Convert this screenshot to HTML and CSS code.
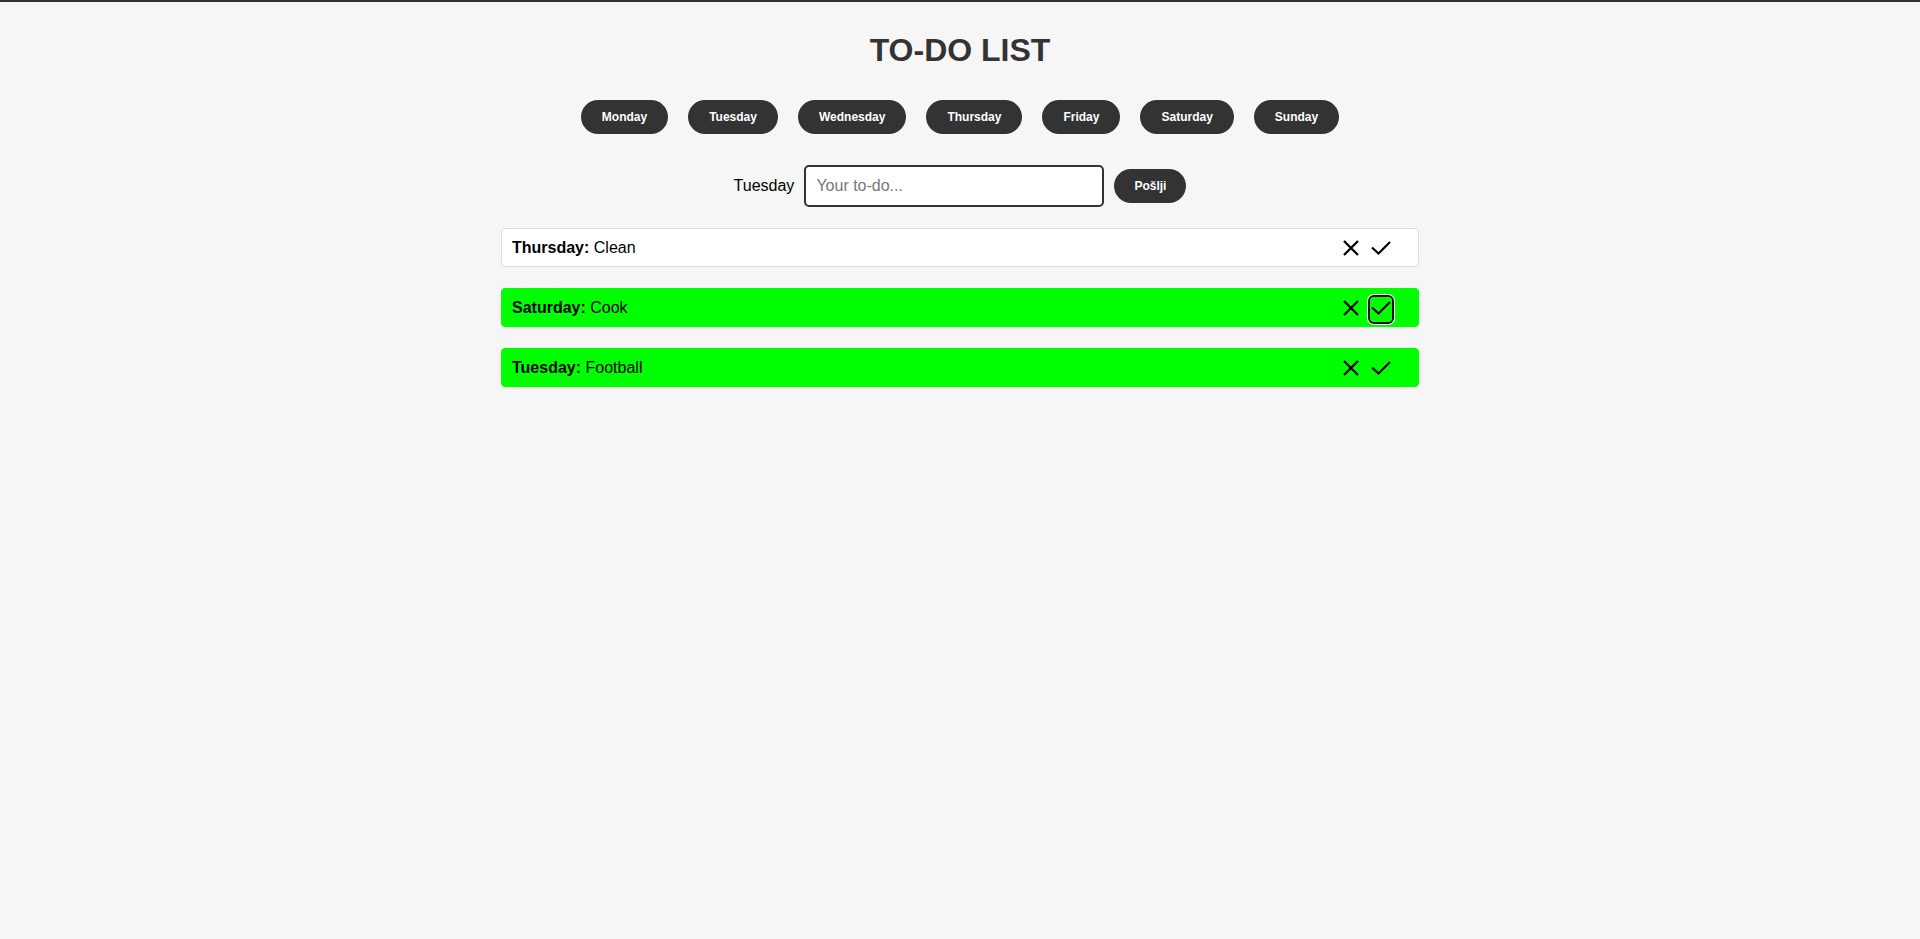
FILE: index.html
```html
<!DOCTYPE html>
<html lang="en">
<head>
<meta charset="utf-8">
<title>To-Do List</title>
<link rel="stylesheet" href="styles.css">
</head>
<body>
<main class="app">
  <h1 class="title">TO-DO LIST</h1>
  <nav class="days">
    <button class="day-btn">Monday</button>
    <button class="day-btn">Tuesday</button>
    <button class="day-btn">Wednesday</button>
    <button class="day-btn">Thursday</button>
    <button class="day-btn">Friday</button>
    <button class="day-btn">Saturday</button>
    <button class="day-btn">Sunday</button>
  </nav>
  <form class="add-row">
    <span class="add-label">Tuesday</span>
    <input class="add-input" type="text" placeholder="Your to-do...">
    <button class="send-btn" type="button">Pošlji</button>
  </form>
  <ul class="todos">
    <li class="todo">
      <span class="todo-text"><strong>Thursday:</strong> Clean</span>
      <span class="actions">
        <button class="icon-btn" aria-label="Delete"><svg width="16" height="16" viewBox="0 0 16 16"><path d="M1 1 L15 15 M15 1 L1 15" stroke="#000" stroke-width="2.3" fill="none"/></svg></button>
        <button class="icon-btn" aria-label="Done"><svg width="20" height="14" viewBox="0 0 20 14"><path d="M1 6.5 L7.5 12.5 L19 1" stroke="#000" stroke-width="2.2" fill="none"/></svg></button>
      </span>
    </li>
    <li class="todo done">
      <span class="todo-text"><strong>Saturday:</strong> Cook</span>
      <span class="actions">
        <button class="icon-btn" aria-label="Delete"><svg width="16" height="16" viewBox="0 0 16 16"><path d="M1 1 L15 15 M15 1 L1 15" stroke="#000" stroke-width="2.3" fill="none"/></svg></button>
        <button class="icon-btn focused" aria-label="Done"><svg width="20" height="14" viewBox="0 0 20 14"><path d="M1 6.5 L7.5 12.5 L19 1" stroke="#000" stroke-width="2.2" fill="none"/></svg></button>
      </span>
    </li>
    <li class="todo done">
      <span class="todo-text"><strong>Tuesday:</strong> Football</span>
      <span class="actions">
        <button class="icon-btn" aria-label="Delete"><svg width="16" height="16" viewBox="0 0 16 16"><path d="M1 1 L15 15 M15 1 L1 15" stroke="#000" stroke-width="2.3" fill="none"/></svg></button>
        <button class="icon-btn" aria-label="Done"><svg width="20" height="14" viewBox="0 0 20 14"><path d="M1 6.5 L7.5 12.5 L19 1" stroke="#000" stroke-width="2.2" fill="none"/></svg></button>
      </span>
    </li>
  </ul>
</main>
</body>
</html>
```
FILE: styles.css
```css
html, body {
  margin: 0;
  padding: 0;
}
body {
  background: #f6f6f6;
  border-top: 2px solid #333;
  font-family: "Liberation Sans", Arial, sans-serif;
  color: #000;
  min-height: 937px;
}
.app {
  display: flex;
  flex-direction: column;
  align-items: center;
}
.title {
  margin: 30px 0 0;
  font-size: 32px;
  line-height: 37px;
  font-weight: bold;
  color: #333;
}
.days {
  display: flex;
  gap: 20px;
  margin-top: 31px;
}
.day-btn, .send-btn {
  background: #333;
  color: #fff;
  border: none;
  border-radius: 20px;
  font-family: "Liberation Sans", Arial, sans-serif;
  font-size: 12px;
  font-weight: bold;
  line-height: 14px;
  padding: 10px 21px;
  height: 34px;
  cursor: pointer;
}
.send-btn {
  padding: 10px 20px;
}
.add-row {
  display: flex;
  align-items: center;
  gap: 10px;
  margin: 31px 0 0;
  height: 42px;
}
.add-label {
  font-size: 16px;
}
.add-input {
  box-sizing: border-box;
  width: 300px;
  height: 42px;
  padding: 10px;
  border: 2px solid #333;
  border-radius: 5px;
  background: #fff;
  font-family: "Liberation Sans", Arial, sans-serif;
  font-size: 16px;
}
.add-input::placeholder {
  color: #777;
}
.todos {
  list-style: none;
  margin: 21px 0 0;
  padding: 0;
  width: 918px;
  display: flex;
  flex-direction: column;
  gap: 21px;
}
.todo {
  box-sizing: border-box;
  height: 39px;
  display: flex;
  align-items: center;
  justify-content: space-between;
  padding: 0 26px 0 10px;
  background: #fff;
  border: 1px solid #ddd;
  border-radius: 4px;
  font-size: 16px;
}
.todo.done {
  background: #00ff00;
  border-color: #00ff00;
}
.actions {
  display: flex;
  gap: 8px;
  margin-top: 4px;
}
.icon-btn {
  box-sizing: border-box;
  width: 22px;
  height: 25px;
  padding: 0 0 4px;
  border: none;
  background: transparent;
  display: flex;
  align-items: center;
  justify-content: center;
  border-radius: 4px;
  cursor: pointer;
}
.icon-btn.focused {
  box-shadow: 0 0 0 2px #101010, 0 0 0 3px #fff;
}
```
